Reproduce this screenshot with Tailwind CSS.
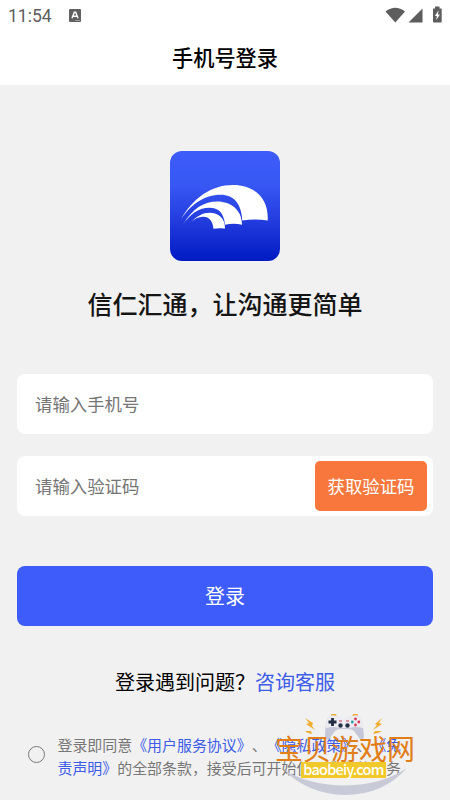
<!DOCTYPE html>
<html lang="zh-CN">
<head>
<meta charset="utf-8">
<title>手机号登录</title>
<script src="https://cdn.jsdelivr.net/npm/@tailwindcss/browser@4"></script>
</head>
<body class="bg-white">
<div class="relative flex h-[800px] w-[450px] flex-col overflow-hidden bg-[#f1f1f1] font-['Noto_Sans_CJK_SC',sans-serif] [text-spacing-trim:space-all]">
  <header class="h-[85px] shrink-0 bg-white">
    <div class="flex h-8 items-center justify-between pr-[7px] pl-2">
      <div class="flex items-center gap-[17px]">
        <span class="w-[44px] font-[Roboto,sans-serif] text-[17.5px] leading-8 font-normal whitespace-nowrap text-[#5d5d5d]">11:54</span>
        <svg class="-mt-[2px] h-[13px] w-[12px]" viewBox="0 0 12 13"><rect width="12" height="13" rx="1" fill="#606060"/><path d="M3 9.2 5.3 3.2h1.4L9 9.2M4 7.2h4" fill="none" stroke="#fff" stroke-width="1.4"/><path d="M6 11.5h5" stroke="#aaa" stroke-width=".8"/></svg>
      </div>
      <svg class="h-[20px] w-[58px]" viewBox="385 6 58 20"><path d="M385.500 11.500Q395.300 4 405 11.500L395.300 22.500Z" fill="#5d5d5d"/><path d="M422.500 8.500V22.500H408.500Z" fill="#5d5d5d"/><path d="M435 6.500h4.500v2h1.500q.7 0 .7.700v12.600q0 .7-.7.700h-7.300q-.7 0-.7-.7V9.200q0-.7.700-.7h1.300Z" fill="#5d5d5d"/><path d="m438.700 10.300-3.800 5.700h2l-.8 4.300 3.800-5.700h-2Z" fill="#fff"/></svg>
    </div>
    <h1 class="flex h-[49px] items-center justify-center text-[21.2px] leading-none font-medium text-black">手机号登录</h1>
  </header>

  <main class="flex flex-col items-center px-[17px]">
    <svg class="mt-[66px] h-[110px] w-[110px]" viewBox="0 0 110 110">
      <defs><linearGradient id="sky" x2="0" y2="1"><stop stop-color="#3d5cfa"/><stop offset=".3" stop-color="#3858f4"/><stop offset=".62" stop-color="#243ddf"/><stop offset="1" stop-color="#001bc2"/></linearGradient></defs>
      <rect width="110" height="110" rx="12" fill="url(#sky)"/>
      <g fill="#fff">
        <path d="M10.500 69C23 47 41 34 63 34C84 34 99 47 97.700 69.500Q85 67.500 72.300 69.500C71.500 52 63 43.700 51 43.700C34 43.700 20 54 10.500 69Z"/>
        <path d="M13 73.500C23 57 34 50.500 47.500 50.500C61 50.500 72 59 72 73.700Q63.500 72 55 73.700C54 62 48.500 56.700 39.500 56.700C28 56.700 19.500 64 13 73.500Z"/>
        <path d="M21 71.300C27 65 33 61.800 39.500 61.800C48.500 61.800 55 67 55 77.500Q49 76.800 43.500 77.700C42.500 69.500 39 66 33.500 65.800C28.500 65.600 24.500 68 21 71.300Z"/>
      </g>
    </svg>
    <h2 class="mt-[22px] h-[40px] text-[25px] leading-[40px] font-medium text-[#151515]">信仁汇通，让沟通更简单</h2>
    <form class="flex w-full flex-col">
      <div class="mt-[51px] flex h-[59.500px] w-[416px] items-center rounded-[8px] bg-white pl-[18px] text-[17.4px] text-[#757575]">请输入手机号</div>
      <div class="mt-[22.500px] flex h-[60px] w-[416px] items-center justify-between rounded-[8px] bg-white pr-[6px] pl-[18px] text-[17.4px] text-[#757575]">
        <span>请输入验证码</span>
        <button type="button" class="h-[50px] w-[112px] rounded-[5px] bg-[#f7773c] text-[17.4px] whitespace-nowrap text-white">获取验证码</button>
      </div>
      <button type="button" class="mt-[50px] h-[60px] w-[416px] rounded-[8px] bg-[#3d5cfa] text-[20px] text-white">登录</button>
    </form>
    <p class="mt-[41px] h-[30px] text-[20px] leading-[30px] whitespace-nowrap text-black">登录遇到问题？<span class="text-[#3d5ce8]">咨询客服</span></p>
    <div class="mt-[37px] flex w-full items-center gap-[12.500px] pl-[11px]">
      <span class="-mt-[5px] h-[17px] w-[17px] shrink-0 rounded-full border-[1.5px] border-[#777]"></span>
      <p class="text-[14.95px] leading-[22.500px] whitespace-nowrap text-[#777]">登录即同意<span class="text-[#3d5ce8]">《用户服务协议》</span>、<span class="text-[#3d5ce8]">《隐私政策》</span>、<span class="text-[#3d5ce8]">《免<br>责声明》</span>的全部条款，接受后可开始使用我们的服务</p>
    </div>
  </main>

  <div class="absolute top-[708px] left-[265px] h-[92px] w-[160px]">
    <svg class="absolute inset-0 h-[92px] w-[160px]" viewBox="265 708 160 92">
      <path d="M283 769Q307 785 345 785.500Q382 785 407 768Q383 795 345 795Q307 794 283 769Z" fill="#c8cad8"/>
      <g fill="#efad31"><path d="m305 718 8 5-1 3 3 4-9-6 3-1ZM305 731l6 0 1 3-4-1ZM382 718l-7 6 2 1-4 5 9-6-3-1ZM382 731l-7 0-2 3 5-1Z"/><path d="M331 717v-2q0-1 1-1h4l1 3ZM352 717l1-3h4q1 0 1 1v2Z"/></g>
      <path d="M329 716.500Q332 715 337 716L340 718H348L352 716Q357 715 360 716.500Q363 720 364 737Q363 741 360 739L354 731Q352 729 348 729H341Q337 729 335 731L329 739Q325 741 325 737Q325 720 329 716.500Z" fill="#c5c8d8"/>
      <path d="M329 716.500Q332 715 337 716L340 718H348L352 716Q357 715 360 716.500Q363 720 363 728Q355 726 350 728H339Q334 726 326 728Q326 720 329 716.500Z" fill="#ececf2"/>
      <path d="M332.500 718v8M328.500 722h8" stroke="#222c42" stroke-width="2.800"/>
      <g fill="#d83953"><circle cx="355.500" cy="719" r="1.400"/><circle cx="355.500" cy="725" r="1.400"/><circle cx="358.800" cy="722" r="1.400"/></g><circle cx="352.300" cy="722" r="1.400" fill="#2b9ba5"/>
      <g fill="#263147"><circle cx="340.500" cy="725.500" r="2.200"/><circle cx="347.500" cy="725.500" r="2.200"/></g><path d="M339 721h3M346 721h3" stroke="#c63b4f" stroke-width="1.200"/>
    </svg>
    <div class="absolute top-[20px] left-[10px] h-[40px] text-[28px] leading-[40px] whitespace-nowrap text-[#e27e18]">宝贝游戏网</div>
    <div class="absolute top-[54px] left-[36px] flex h-[16px] w-[85px] items-center justify-center bg-[#f1c92b] pb-[1px] text-[14.500px] leading-none font-medium tracking-[-0.75px] whitespace-nowrap text-white">baobeiy.com</div>
  </div>
</div>
</body>
</html>
